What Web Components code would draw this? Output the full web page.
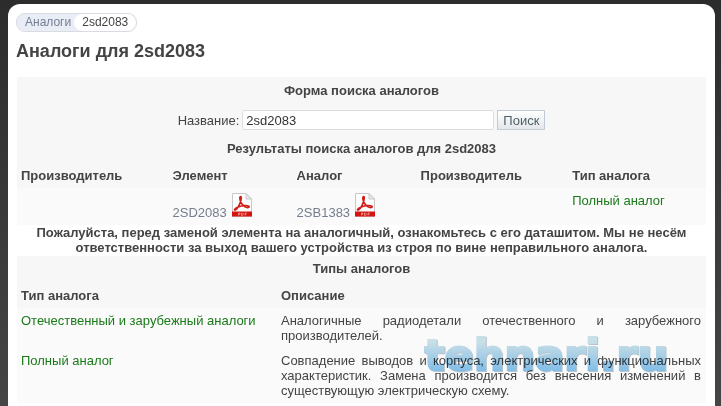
<!DOCTYPE html>
<html lang="ru">
<head>
<meta charset="utf-8">
<title>Аналоги для 2sd2083</title>
<style>
  html {
    min-height: 100%;
    background: linear-gradient(#2c2c2c, #464646);
  }
  body {
    margin: 0;
    font: 13px/15px "Liberation Sans", Arial, sans-serif;
    color: #444;
  }
</style>
</head>
<body>
<page-panel>
  <crumb-trail parent="Аналоги" current="2sd2083"></crumb-trail>
  <page-title>Аналоги для 2sd2083</page-title>
  <search-form value="2sd2083"></search-form>
  <analog-results></analog-results>
  <page-note>Пожалуйста, перед заменой элемента на аналогичный, ознакомьтесь с его даташитом. Мы не несём ответственности за выход вашего устройства из строя по вине неправильного аналога.</page-note>
  <analog-types></analog-types>
</page-panel>

<script>
class BaseElement extends HTMLElement {
  render(html) {
    this.attachShadow({ mode: 'open' }).innerHTML = html;
  }
}

const tableStyle = `
  :host {
    display: block;
    margin: 0 1px;
  }
  table {
    width: 100%;
    table-layout: fixed;
    border-collapse: collapse;
  }
  caption, th {
    font-weight: bold;
    background: #f7f7f7;
  }
  caption {
    padding: 5px 5px 7px;
  }
  th, td {
    padding: 5px 5px 5px 4px;
    text-align: left;
    vertical-align: top;
  }
  td {
    background: #fafafa;
  }
  .type {
    color: #1a7a1a;
  }`;

class PagePanel extends BaseElement {
  constructor() {
    super();
    this.render(`<style>
        :host {
          display: block;
          margin: 4px 6px 0 8px;
          padding: 9px 8px 12px;
          min-height: calc(100vh - 25px);
          border-radius: 12px 12px 0 0;
          background: #fff;
        }
        </style>
        <slot></slot>`);
  }
}

class CrumbTrail extends BaseElement {
  constructor() {
    super();
    this.render(`<style>
        :host {
          display: flex;
          font-size: 12px;
        }
        nav {
          display: flex;
          border: 1px solid #d8dbe2;
          border-radius: 9px;
          background: #e9edf5;
        }
        a, span {
          padding: 1px 8px;
        }
        a {
          padding-right: 3px;
          color: #757e95;
          text-decoration: none;
        }
        span {
          border-radius: 9px;
          background: #fff;
        }
        </style>
        <nav><a href="#">${this.getAttribute('parent')}</a><span>${this.getAttribute('current')}</span></nav>`);
  }
}

class PageTitle extends BaseElement {
  constructor() {
    super();
    this.render(`<style>
        :host {
          display: block;
        }
        h1 {
          margin: 9px 0 15px;
          font-size: 18px;
          line-height: 21px;
        }
        </style>
        <h1><slot></slot></h1>`);
  }
}

class SearchForm extends BaseElement {
  constructor() {
    super();
    this.render(`<style>
        :host {
          display: block;
          margin: 0 1px;
          background: #f7f7f7;
        }
        h2 {
          margin: 0;
          padding: 6px 5px;
          font-size: 13px;
          text-align: center;
        }
        form {
          display: flex;
          justify-content: center;
          align-items: center;
          gap: 3px;
          padding: 6px 5px;
        }
        input, button {
          box-sizing: border-box;
          height: 20px;
          margin: 0;
          font: inherit;
        }
        input {
          width: 252px;
          padding: 0 3px;
          color: #333;
          background: #fff;
          border: 1px solid #ddd;
          border-radius: 3px;
        }
        button {
          padding: 0 5px;
          color: #4f5f66;
          background: linear-gradient(#fff, #e4e8eb);
          border: 1px solid #c5cbd2;
        }
        </style>
        <h2>Форма поиска аналогов</h2>
        <form>
          <label for="name">Название:</label>
          <input id="name" type="text" value="${this.getAttribute('value')}">
          <button type="button">Поиск</button>
        </form>`);
  }
}

class PdfLink extends BaseElement {
  constructor() {
    super();
    this.render(`<style>
        :host {
          display: block;
        }
        a {
          display: flex;
          align-items: flex-end;
          gap: 4px;
          color: #757e8c;
          text-decoration: none;
        }
        svg {
          display: block;
          margin-bottom: 3px;
        }
        </style>
        <a href="#"><slot></slot><svg width="22" height="24" viewBox="0 0 22 24" aria-hidden="true">
          <path d="M1.500.5h13.500l5.500 5.500v17.500h-19z" fill="#fdfdfd" stroke="#c8c8c8"/>
          <path d="M15 .5v5.500h5.500z" fill="#e8e8e8" stroke="#c8c8c8"/>
          <path d="M1 18.500h20v5h-20z" fill="#d5130f"/>
          <path d="M9.500 3.500c-1.500.3-.5 4 .6 6.200 1.700 3.400 5.200 5.300 7.300 4.800 2-.5.2-2.300-3.700-2-4.200.3-9.700 2.200-10.200 4-.3 1.300 2 .7 3.900-2.800C9.300 10.300 11.500 3.300 9.500 3.500z" fill="none" stroke="#cf1d1a" stroke-width="1.600"/>
          <path d="M7.500 22.500v-2.500h1.500v1.300h-1.500M10.500 22.500v-2.500h1l.7.7v1l-.7.8zM14 22.500v-2.500h1.800M14 21.300h1.500" fill="none" stroke="#f5b0ad" stroke-width=".7"/>
        </svg></a>`);
  }
}

class AnalogResults extends BaseElement {
  constructor() {
    super();
    this.render(`<style>
        ${tableStyle}
        .maker {
          width: 22%;
        }
        .part {
          width: 18%;
        }
        </style>
        <table>
          <caption>Результаты поиска аналогов для 2sd2083</caption>
          <colgroup><col class="maker"><col class="part"><col class="part"><col class="maker"><col></colgroup>
          <thead>
            <tr><th>Производитель</th><th>Элемент</th><th>Аналог</th><th>Производитель</th><th>Тип аналога</th></tr>
          </thead>
          <tbody>
            <tr>
              <td></td>
              <td><pdf-link>2SD2083</pdf-link></td>
              <td><pdf-link>2SB1383</pdf-link></td>
              <td></td>
              <td class="type">Полный аналог</td>
            </tr>
          </tbody>
        </table>`);
  }
}

class PageNote extends BaseElement {
  constructor() {
    super();
    this.render(`<style>
        :host {
          display: block;
        }
        p {
          margin: 0;
          padding: 0 8px;
          font-weight: bold;
          text-align: center;
        }
        </style>
        <p><slot></slot></p>`);
  }
}

class SiteMark extends BaseElement {
  constructor() {
    super();
    this.render(`<style>
        :host {
          position: absolute;
          right: 38px;
          bottom: 26px;
          font: bold 43px/44px "DejaVu Sans", sans-serif;
          color: transparent;
          background: linear-gradient(#b8d8e2 20%, #4ca4e4 90%);
          -webkit-background-clip: text;
          background-clip: text;
          -webkit-text-stroke: 2px transparent;
          filter: drop-shadow(1px 1px 0 #9fb0bc);
          opacity: .7;
          mix-blend-mode: multiply;
          pointer-events: none;
        }
        </style>
        <slot></slot>`);
  }
}

class AnalogTypes extends BaseElement {
  constructor() {
    super();
    this.render(`<style>
        ${tableStyle}
        :host {
          position: relative;
          margin-top: 1px;
        }
        .name {
          width: 260px;
        }
        .text {
          text-align: justify;
        }
        </style>
        <table>
          <caption>Типы аналогов</caption>
          <colgroup><col class="name"><col></colgroup>
          <thead>
            <tr><th>Тип аналога</th><th>Описание</th></tr>
          </thead>
          <tbody>
            <tr>
              <td class="type">Отечественный и зарубежный аналоги</td>
              <td class="text">Аналогичные радиодетали отечественного и зарубежного производителей.</td>
            </tr>
            <tr>
              <td class="type">Полный аналог</td>
              <td class="text">Совпадение выводов и корпуса, электрических и функциональных характеристик. Замена производится без внесения изменений в существующую электрическую схему.</td>
            </tr>
          </tbody>
        </table>
        <site-mark>tehnari.ru</site-mark>`);
  }
}

customElements.define('page-panel', PagePanel);
customElements.define('crumb-trail', CrumbTrail);
customElements.define('page-title', PageTitle);
customElements.define('search-form', SearchForm);
customElements.define('pdf-link', PdfLink);
customElements.define('analog-results', AnalogResults);
customElements.define('page-note', PageNote);
customElements.define('site-mark', SiteMark);
customElements.define('analog-types', AnalogTypes);
</script>
</body>
</html>
